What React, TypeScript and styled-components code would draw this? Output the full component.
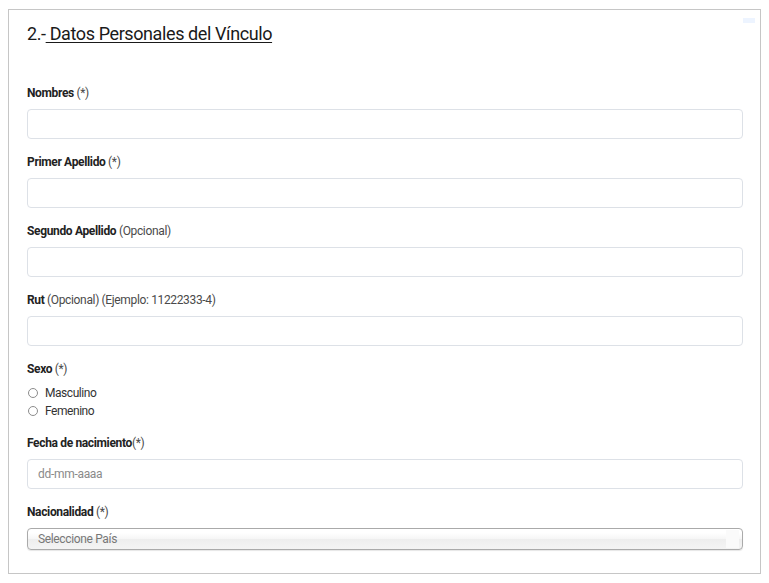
import React from 'react';
import styled, { createGlobalStyle } from 'styled-components';

const GlobalStyle = createGlobalStyle`
  html, body {
    margin: 0;
    padding: 0;
    background: #fff;
  }
  body {
    font-family: Roboto, "Liberation Sans", Arial, sans-serif;
    color: #222;
  }
`;

const Card = styled.section`
  position: relative;
  box-sizing: border-box;
  width: 753px;
  height: 565px;
  margin: 9px 0 0 8px;
  padding: 12px 17px 0 18px;
  border: 1px solid #c6c6c6;
  background: #fff;
`;

const Corner = styled.div`
  position: absolute;
  top: 8px;
  right: 5px;
  width: 12px;
  height: 5px;
  background: #edf4ff;
`;

const Title = styled.h2`
  margin: 0 0 39px;
  font-size: 18px;
  line-height: 24px;
  font-weight: 400;
  color: #1a1a1a;
  letter-spacing: -0.4px;
`;

const Underlined = styled.span`
  text-decoration: underline;
  text-underline-offset: 2px;
  text-decoration-thickness: 1px;
`;

const Field = styled.div`
  display: flex;
  flex-direction: column;
  margin-bottom: 15px;
`;

const Label = styled.label`
  display: block;
  font-size: 12px;
  line-height: 16px;
  font-weight: 700;
  color: #222;
  letter-spacing: -0.35px;
  margin-bottom: 8px;
`;

const Hint = styled.span`
  font-weight: 400;
  color: #4a4a4a;
`;

const TextInput = styled.input`
  box-sizing: border-box;
  width: 100%;
  height: 30px;
  margin: 0;
  padding: 0 10px;
  border: 1px solid #dde1e7;
  border-radius: 4px;
  background: #fff;
  font-family: inherit;
  font-size: 12px;
  letter-spacing: -0.3px;
  color: #333;
  outline: none;

  &::placeholder {
    color: #8a8a8a;
  }
`;

const RadioList = styled.div`
  display: flex;
  flex-direction: column;
  margin-top: -1px;
`;

const RadioRow = styled.label`
  display: flex;
  align-items: center;
  height: 18px;
  font-size: 12px;
  color: #333;
  letter-spacing: -0.45px;
`;

const RadioDot = styled.span`
  box-sizing: border-box;
  width: 10px;
  height: 10px;
  margin: 0 7px 0 1px;
  border: 1px solid #8c8c8c;
  border-radius: 50%;
  background: #fff;
`;

const Select = styled.div`
  position: relative;
  box-sizing: border-box;
  height: 22px;
  padding: 0 10px;
  border: 1px solid #aaa;
  border-radius: 4px;
  background: linear-gradient(#fff 20%, #f6f6f6 50%, #eee 52%, #f4f4f4 100%);
  box-shadow: 0 1px 1px rgba(0, 0, 0, 0.1);
  display: flex;
  align-items: center;
  font-size: 12px;
  color: #777;
  letter-spacing: -0.35px;

  &::after {
    content: "";
    position: absolute;
    top: 1px;
    right: 3px;
    bottom: 1px;
    width: 13px;
    background: #fafafa;
  }
`;

const fields = [
  { label: 'Nombres', hint: '(*)' },
  { label: 'Primer Apellido', hint: '(*)' },
  { label: 'Segundo Apellido', hint: '(Opcional)' },
  { label: 'Rut', hint: '(Opcional) (Ejemplo: 11222333-4)' },
];

const App = () => (
  <>
    <GlobalStyle />
    <Card>
      <Corner />
      <Title>
        2.-
        <Underlined> Datos Personales del Vínculo</Underlined>
      </Title>

      {fields.map(({ label, hint }) => (
        <Field key={label}>
          <Label>
            {label}
            {' '}
            <Hint>{hint}</Hint>
          </Label>
          <TextInput type="text" />
        </Field>
      ))}

      <Field>
        <Label>
          Sexo <Hint>(*)</Hint>
        </Label>
        <RadioList>
          <RadioRow><RadioDot />Masculino</RadioRow>
          <RadioRow><RadioDot />Femenino</RadioRow>
        </RadioList>
      </Field>

      <Field>
        <Label>
          Fecha de nacimiento<Hint>(*)</Hint>
        </Label>
        <TextInput type="text" placeholder="dd-mm-aaaa" />
      </Field>

      <Field>
        <Label>
          Nacionalidad <Hint>(*)</Hint>
        </Label>
        <Select>Seleccione País</Select>
      </Field>
    </Card>
  </>
);

export default App;
